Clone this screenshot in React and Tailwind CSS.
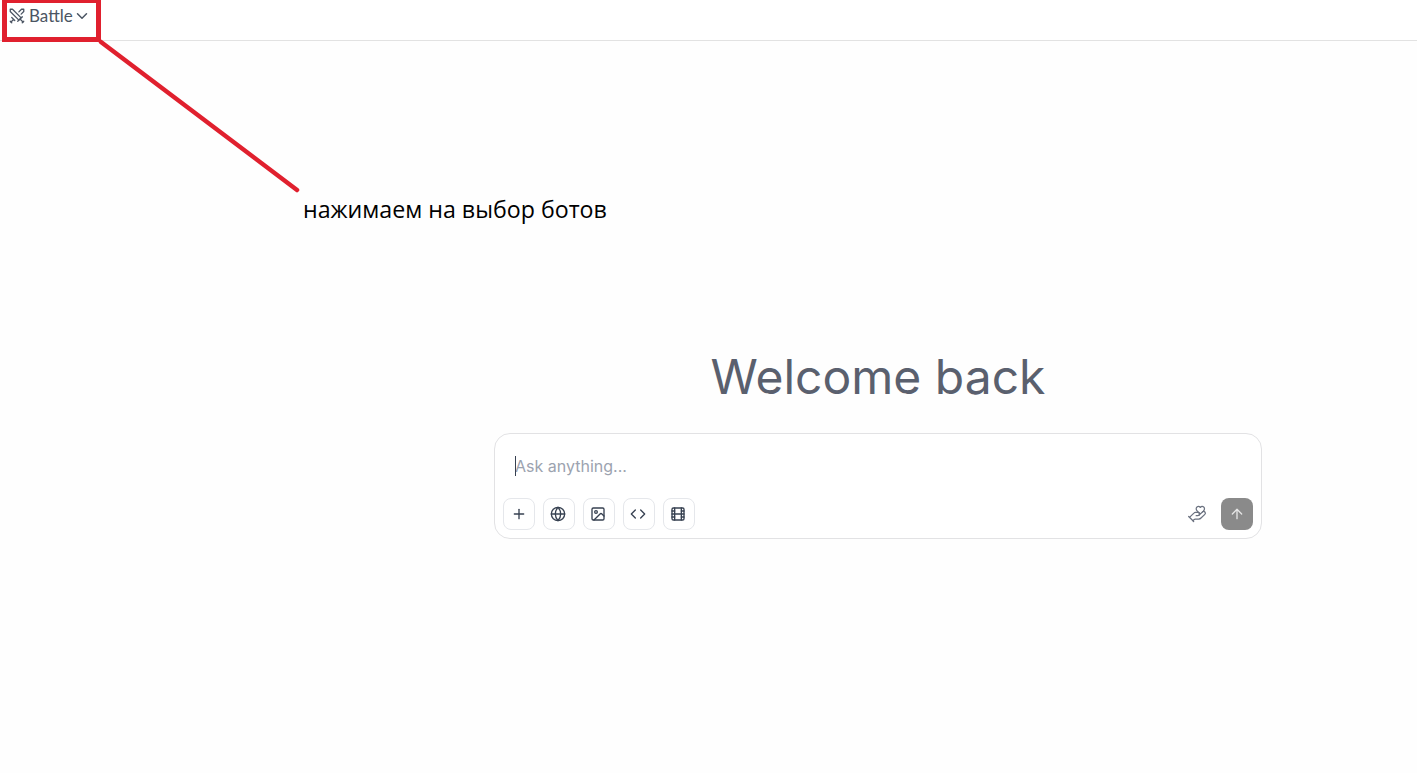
import React from 'react';
import { Swords, ChevronDown, Plus, Globe, Image, Code, HandHeart, ArrowUp } from 'lucide-react';

// lucide's current Film dropped the side ticks the reference has
const FilmIcon = ({ className }) => (
  <svg className={className} viewBox="0 0 24 24" fill="none" stroke="currentColor" strokeWidth="2" strokeLinecap="round" strokeLinejoin="round">
    <rect x="3" y="3" width="18" height="18" rx="2" />
    <path d="M7 3v18" />
    <path d="M17 3v18" />
    <path d="M3 12h18" />
    <path d="M3 7.5h4" />
    <path d="M3 16.5h4" />
    <path d="M17 7.5h4" />
    <path d="M17 16.5h4" />
  </svg>
);

const tools = [
  { id: 'add', icon: Plus, className: 'pr-0' },
  { id: 'web', icon: Globe, className: 'pr-[2px]' },
  { id: 'image', icon: Image, className: 'pr-[2px]' },
  { id: 'code', icon: Code, className: 'pr-[2px]' },
  { id: 'video', icon: FilmIcon, className: 'pr-[2px]' },
];

const App = () => {
  return (
    <div className="relative h-[773px] overflow-hidden bg-[#fefefe] font-['Inter',sans-serif]">
      {/* Header */}
      <header className="h-[41px] border-b border-[#e2e2e2] bg-white pl-2 pt-[6px]">
        <button className="flex items-center font-['Lato',sans-serif] text-[17px] leading-5 text-[#4b5563]">
          <Swords className="-mt-px h-[18px] w-[18px]" strokeWidth={1.75} />
          <span className="ml-[3px]">Battle</span>
          <ChevronDown className="h-[18px] w-[18px]" strokeWidth={2} />
        </button>
      </header>

      {/* Main */}
      <main className="flex flex-col items-center pl-[339px] pt-[307px]">
        <h1 className="text-[48px] font-normal leading-[58px] text-[#5a606e]">Welcome back</h1>

        <div className="mt-[27px] h-[106px] w-[768px] rounded-2xl border border-[#e2e2e4] bg-white px-2 pt-[20px]">
          <div className="relative flex h-6 items-center pl-3 text-[16px] text-[#9ca3af]">
            <span className="absolute left-3 top-[2px] h-[20px] w-px bg-[#374151]" />
            <span>Ask anything...</span>
          </div>
          <div className="mt-[20px] flex items-center justify-between">
            <div className="flex gap-2">
              {tools.map(({ id, icon: Icon, className }) => (
                <button
                  key={id}
                  className={`flex h-8 w-8 items-center justify-center rounded-lg border border-[#e5e7eb] text-[#374151] ${className}`}
                >
                  <Icon className="h-4 w-4" />
                </button>
              ))}
            </div>
            <div className="flex items-center gap-[14px]">
              <HandHeart className="h-5 w-5 text-[#6b7280]" strokeWidth={1.5} />
              <button className="flex h-8 w-8 items-center justify-center rounded-lg bg-[#8a8a8a] text-[#e5e5e5]">
                <ArrowUp className="h-4 w-4" />
              </button>
            </div>
          </div>
        </div>
      </main>

      {/* Annotation drawn over the screenshot */}
      <div className="absolute left-[2px] top-[-2px] h-[44px] w-[99px] border-[5px] border-[#e0202e]" />
      <svg className="absolute left-0 top-0" width="320" height="200">
        <line x1="101" y1="42" x2="297" y2="190" stroke="#e0202e" strokeWidth="4.5" strokeLinecap="round" />
      </svg>
      <p className="absolute left-[303px] top-[194px] font-['Open_Sans',sans-serif] text-[23.2px] leading-[30px] text-black">
        нажимаем на выбор ботов
      </p>
    </div>
  );
};

export default App;
